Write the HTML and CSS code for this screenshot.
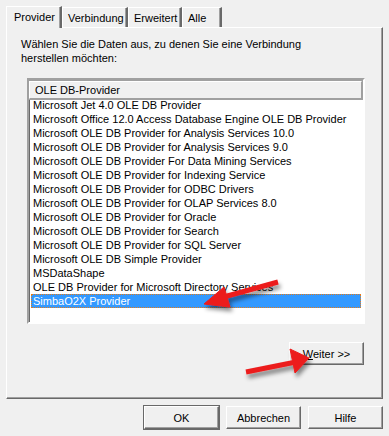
FILE: index.html
```html
<!DOCTYPE html>
<html lang="de">
<head>
    <meta charset="UTF-8">
    <title>Datenverknüpfungseigenschaften</title>
    <link rel="stylesheet" href="styles.css">
</head>
<body>
    <div class="dialog">
        <div class="tabs">
            <div class="tab active">Provider</div>
            <div class="tab">Verbindung</div>
            <div class="tab">Erweitert</div>
            <div class="tab tab-last">Alle</div>
        </div>

        <div class="panel">
            <p class="intro">Wählen Sie die Daten aus, zu denen Sie eine Verbindung<br>herstellen möchten:</p>

            <div class="listbox">
                <div class="list-header">OLE DB-Provider</div>
                <ul class="list-items">
                    <li>Microsoft Jet 4.0 OLE DB Provider</li>
                    <li>Microsoft Office 12.0 Access Database Engine OLE DB Provider</li>
                    <li>Microsoft OLE DB Provider for Analysis Services 10.0</li>
                    <li>Microsoft OLE DB Provider for Analysis Services 9.0</li>
                    <li>Microsoft OLE DB Provider For Data Mining Services</li>
                    <li>Microsoft OLE DB Provider for Indexing Service</li>
                    <li>Microsoft OLE DB Provider for ODBC Drivers</li>
                    <li>Microsoft OLE DB Provider for OLAP Services 8.0</li>
                    <li>Microsoft OLE DB Provider for Oracle</li>
                    <li>Microsoft OLE DB Provider for Search</li>
                    <li>Microsoft OLE DB Provider for SQL Server</li>
                    <li>Microsoft OLE DB Simple Provider</li>
                    <li>MSDataShape</li>
                    <li>OLE DB Provider for Microsoft Directory Services</li>
                    <li class="selected">SimbaO2X Provider</li>
                </ul>
            </div>

            <div class="next-row">
                <button class="btn"><u>W</u>eiter &gt;&gt;</button>
            </div>
        </div>

        <div class="footer">
            <button class="btn btn-default">OK</button>
            <button class="btn">Abbrechen</button>
            <button class="btn">Hilfe</button>
        </div>

        <!-- Markierungspfeile -->
        <svg class="arrows" width="389" height="436" viewBox="0 0 389 436">
            <defs>
                <filter id="shadow" x="-20%" y="-50%" width="160%" height="220%">
                    <feDropShadow dx="2" dy="4" stdDeviation="2" flood-color="#000" flood-opacity="0.45"/>
                </filter>
            </defs>
            <g filter="url(#shadow)" fill="#ec1c1c" stroke="#ec1c1c">
                <line x1="278" y1="282" x2="220" y2="298" stroke-width="5"/>
                <polygon points="204,304 224,287 230,307" stroke-width="1"/>
                <line x1="246" y1="372" x2="296" y2="362" stroke-width="5"/>
                <polygon points="309,358 290,349 295,373" stroke-width="1"/>
            </g>
        </svg>
    </div>
</body>
</html>
```

FILE: styles.css
```css
body {
    margin: 0;
    background-color: #f0f0f0;
    font-family: "Liberation Sans", Arial, sans-serif;
    font-size: 11px;
    color: #000;
}

.dialog {
    position: relative;
    width: 389px;
    height: 436px;
}

.tabs {
    display: flex;
    align-items: flex-end;
    height: 27px;
    padding-left: 6px;
}

.tab {
    height: 17px;
    padding: 2px 6px 0 5px;
    line-height: 16px;
    border-top: 1px solid #fff;
    border-left: 1px solid #fff;
    border-right: 2px solid #696969;
    box-shadow: inset -1px 0 #a0a0a0;
}

.tab:nth-child(2) {
    width: 52px;
}

.tab:nth-child(3) {
    width: 40px;
}

.tab-last {
    width: 26px;
}

.tab.active {
    position: relative;
    height: 21px;
    width: 41px;
    padding: 0 5px 0 7px;
    line-height: 20px;
    margin-bottom: -1px;
    background-color: #f0f0f0;
    z-index: 1;
}

.panel {
    height: 361px;
    margin: 0 6px;
    padding: 9px 17px 0 14px;
    border-top: 1px solid #fff;
    border-left: 1px solid #fff;
    border-right: 1px solid #696969;
    border-bottom: 1px solid #696969;
    box-shadow: inset -1px -1px #a0a0a0;
}

.intro {
    margin: 0;
    line-height: 14px;
}

.listbox {
    margin: 13px 0 0 6px;
    height: 242px;
    background-color: #fff;
    border: 2px solid;
    border-color: #a0a0a0 #fff #fff #a0a0a0;
    box-shadow: inset 1px 1px #696969;
}

.list-header {
    position: relative;
    top: 1px;
    height: 16px;
    line-height: 16px;
    padding-left: 5px;
    margin-right: 1px;
    background-color: #f0f0f0;
    border: 1px solid #a0a0a0;
    border-top-color: #fff;
    border-left-color: #fff;
    box-shadow: 0 0 0 1px #a0a0a0;
}

.list-items {
    list-style: none;
    margin: 0;
    padding: 0 2px;
}

.list-items li {
    height: 14px;
    line-height: 14px;
    padding-left: 2px;
    white-space: nowrap;
}

.list-items li.selected {
    background-color: #3399ff;
    color: #fff;
    outline: 1px dotted #e57b17;
    outline-offset: -1px;
}

.next-row {
    display: flex;
    justify-content: flex-end;
    margin-top: 18px;
    padding-right: 1px;
}

.btn {
    width: 75px;
    height: 23px;
    padding: 0;
    font-family: inherit;
    font-size: 11px;
    color: #000;
    background-color: #f0f0f0;
    border: 1px solid;
    border-color: #fff #696969 #696969 #fff;
    box-shadow: inset -1px -1px #a0a0a0;
}

.btn-default {
    outline: 1px solid #696969;
}

.footer {
    display: flex;
    justify-content: flex-end;
    gap: 7px;
    margin-top: 7px;
    padding-right: 6px;
}

.arrows {
    position: absolute;
    left: 0;
    top: 0;
    pointer-events: none;
}
```
